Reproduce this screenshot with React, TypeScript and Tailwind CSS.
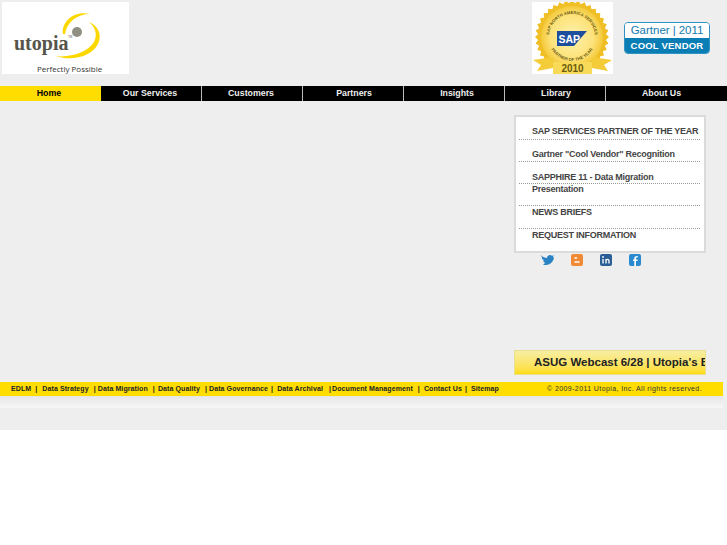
import React from 'react';

const navItems = [
    { label: 'Customers', cls: 'pr-[2px]' },
    { label: 'Partners', cls: 'pl-[2px]' },
    { label: 'Insights', cls: 'pl-[6px]' },
    { label: 'Library', cls: 'pl-[2px]' },
];

const newsRows = [
    { label: 'SAP SERVICES PARTNER OF THE YEAR', cls: 'h-[21px] pt-[6px] border-b border-dotted border-[#999999]' },
    { label: 'Gartner "Cool Vendor" Recognition', cls: 'h-[22px] pt-[8px] border-b border-dotted border-[#999999]' },
    { label: 'SAPPHIRE 11 - Data Migration Presentation', cls: 'h-[22px] pt-[9px] border-b border-dotted border-[#999999]' },
    { label: '', cls: 'h-[22px] border-b border-dotted border-[#999999]' },
    { label: 'NEWS BRIEFS', cls: 'h-[23px] border-b border-dotted border-[#999999]' },
    { label: 'REQUEST INFORMATION', cls: '' },
];

const sealPoints = Array.from({ length: 72 }, (_, i) => {
    const r = i % 2 === 0 ? 37 : 34;
    const a = (i * Math.PI) / 36;
    return `${40 + r * Math.cos(a)},${35 + r * Math.sin(a)}`;
}).join(' ');

const UtopiaLogo = () => (
    <div className="relative w-[127px] h-[72px] bg-white shrink-0">
        <svg className="absolute left-0 top-0" width="127" height="72" viewBox="0 0 127 72">
            <path d="M61 32 C59 20 72 8 88 12 C75 12 65 20 63 32 Z" fill="#fcd800" />
            <path d="M87 20 C97 24 100 34 96 42 C90 54 70 60 54 54 C68 56 86 50 92 40 C96 32 93 25 87 20 Z" fill="#fcd800" />
            <circle cx="75" cy="30" r="5" fill="#8f8f82" />
        </svg>
        <span className="absolute left-[12px] top-[29px] font-['Liberation_Serif',serif] font-bold text-[20px] leading-[24px] text-[#55554a]">utopia</span>
        <span className="absolute left-[66px] top-[33px] text-[3px] leading-[4px] text-[#666666]">TM</span>
        <span className="absolute left-[35px] top-[62px] font-['Open_Sans',sans-serif] text-[8px] leading-[10px] text-[#333333]">Perfectly Possible</span>
    </div>
);

const SapSeal = () => (
    <div className="w-[81px] h-[72px] bg-white shrink-0">
        <svg width="81" height="72" viewBox="0 0 81 72">
            <defs>
                <radialGradient id="seal">
                    <stop offset="0%" stopColor="#fff3b0" />
                    <stop offset="70%" stopColor="#fde27a" />
                    <stop offset="100%" stopColor="#f4c93a" />
                </radialGradient>
                <path id="ringTop" d="M17 35 A23 23 0 0 1 63 35" />
                <path id="ringBottom" d="M16 35 A24 24 0 0 0 64 35" />
            </defs>
            <polygon points={sealPoints} fill="#efbf25" />
            <circle cx="40" cy="35" r="31" fill="url(#seal)" />
            <text fontFamily="Liberation Sans, sans-serif" fontWeight="700" fontSize="4.2" fill="#6a5a10">
                <textPath href="#ringTop" startOffset="50%" textAnchor="middle">SAP NORTH AMERICA SERVICES</textPath>
            </text>
            <text fontFamily="Liberation Sans, sans-serif" fontWeight="700" fontSize="4.2" fill="#6a5a10">
                <textPath href="#ringBottom" startOffset="50%" textAnchor="middle">PARTNER OF THE YEAR</textPath>
            </text>
            <path d="M25 29 H55 L42 44 H25 Z" fill="#1f4f9c" />
            <text x="26.5" y="41" fontFamily="Liberation Sans, sans-serif" fontWeight="700" fontSize="10.5" fill="#ffffff">SAP</text>
            <path d="M1 58 L21 55 V66 L5 69 L9 63 Z" fill="#f4cc3a" />
            <path d="M80 58 L60 55 V66 L76 69 L72 63 Z" fill="#f4cc3a" />
            <rect x="21" y="60" width="39" height="12" fill="#f8da58" />
            <text x="40.5" y="70" textAnchor="middle" fontFamily="Liberation Sans, sans-serif" fontWeight="700" fontSize="10" fill="#6a5a10">2010</text>
        </svg>
    </div>
);

const GartnerBadge = () => (
    <div className="w-[86px] h-[32px] mt-[20px] ml-[11px] mr-[17px] rounded-[4px] border border-[#2f93c4] overflow-hidden flex flex-col shrink-0">
        <div className="h-[15px] bg-white flex items-center justify-center gap-[3px] text-[#1479ad] text-[11.5px] leading-none">
            <span>Gartner</span>
            <span>|</span>
            <span>2011</span>
        </div>
        <div className="flex-1 bg-[#0a7db5] flex items-center justify-center text-white font-bold text-[9.5px] tracking-[0.2px] leading-none">COOL VENDOR</div>
    </div>
);

const SocialIcons = () => (
    <div className="flex h-[13px] items-center">
        <svg className="ml-[26px]" width="14" height="12" viewBox="0 0 14 12">
            <path d="M0 1 C3 3 5 4 7 4 C7 1 11 0 12 2 L14 1 L13 3 L14 4 C13 8 10 11 6 11 L3 11 L5 9 L3 7 L4 6 L2 5 L2 3 Z" fill="#2a83c4" />
        </svg>
        <svg className="ml-[17px]" width="12" height="12" viewBox="0 0 12 12">
            <rect width="12" height="12" rx="2" fill="#f08a35" />
            <path d="M3.5 4 H6 M3.5 8 H8.5" stroke="#ffffff" strokeWidth="1.6" />
        </svg>
        <svg className="ml-[17px]" width="12" height="12" viewBox="0 0 12 12">
            <rect width="12" height="12" rx="2" fill="#2b5e94" />
            <path d="M3 5 V9.5 M6 9.5 V5 M6 7 C6 5 9 4.5 9 7 V9.5" stroke="#ffffff" strokeWidth="1.3" fill="none" />
            <circle cx="3" cy="3" r="0.9" fill="#ffffff" />
        </svg>
        <svg className="ml-[17px]" width="12" height="12" viewBox="0 0 12 12">
            <rect width="12" height="12" rx="2" fill="#2a8ad0" />
            <path d="M7 12 V7 H8.6 V5.4 H7 V4.4 C7 3.8 7.3 3.5 8.7 3.5 V2 C6.3 1.8 5.3 2.8 5.3 4.2 V5.4 H4 V7 H5.3 V12 Z" fill="#ffffff" />
        </svg>
    </div>
);

const FooterLinks = () => (
    <div className="flex items-center whitespace-nowrap">
        <span className="ml-[11px]">EDLM</span>
        <span className="ml-[4px]">|</span>
        <span className="ml-[5px]">Data Strategy</span>
        <span className="ml-[5px]">|</span>
        <span className="ml-[2px]">Data Migration</span>
        <span className="ml-[5px]">|</span>
        <span className="ml-[3px]">Data Quality</span>
        <span className="ml-[5px]">|</span>
        <span className="ml-[2px]">Data Governance</span>
        <span className="ml-[3px]">|</span>
        <span className="ml-[4px]">Data Archival</span>
        <span className="ml-[6px]">|</span>
        <span className="ml-[1px]">Document Management</span>
        <span className="ml-[5px]">|</span>
        <span className="ml-[4px]">Contact Us</span>
        <span className="ml-[3px]">|</span>
        <span className="ml-[4px]">Sitemap</span>
    </div>
);

export default function App() {
    return (
        <div className="min-h-screen bg-white font-['Liberation_Sans',sans-serif]">
            <div className="h-[430px] bg-[#eeeeee] overflow-hidden">
                {/* Header */}
                <div className="h-[86px] pt-[2px] pl-[2px] flex">
                    <UtopiaLogo />
                    <div className="flex-1" />
                    <SapSeal />
                    <GartnerBadge />
                </div>

                {/* Main nav */}
                <nav className="flex h-[15px] bg-black text-[8.8px] font-bold leading-[15px] text-center text-[#eeeeee]">
                    <a className="w-[101px] pr-[3px] bg-[#ffdd00] text-black">Home</a>
                    <a className="w-[100px] pr-[2px]">Our Services</a>
                    {navItems.map(item => (
                        <a key={item.label} className={`w-[101px] border-l border-[#bbbbbb] ${item.cls}`}>{item.label}</a>
                    ))}
                    <a className="flex-1 pr-[10px] border-l border-[#bbbbbb]">About Us</a>
                </nav>

                {/* Sidebar */}
                <div className="ml-[514px] w-[192px] h-[281px] pt-[14px]">
                    <div className="h-[138px] bg-white border-2 border-[#dadada] pt-[2px] pl-[3px] pr-[4px] text-[9px] tracking-[-0.25px] font-bold leading-[12px] text-[#444444]">
                        {newsRows.map((row, i) => (
                            <div key={i} className={`pl-[13px] ${row.cls}`}>
                                {row.label}
                            </div>
                        ))}
                    </div>
                    <SocialIcons />
                    <div className="mt-[84px] h-[25px] w-[192px] overflow-hidden whitespace-nowrap bg-gradient-to-b from-[#f7eea0] to-[#ffdd00] border border-[#eadf90] pl-[19px] text-[11.5px] font-bold leading-[23px] text-[#222222]">
                        ASUG Webcast 6/28 | Utopia's Blog
                    </div>
                </div>

                {/* Footer bar */}
                <div className="h-[14px] mr-[4px] bg-[#ffdd00] flex justify-between text-[7px] font-bold leading-[14px] text-[#222222] tracking-[0.1px]">
                    <FooterLinks />
                    <span className="mr-[21px] font-normal text-[#333333] tracking-[0.4px]">© 2009-2011 Utopia, Inc. All rights reserved.</span>
                </div>
                <div className="h-[12px] mr-[4px] bg-gradient-to-b from-[#e6e6e6] to-[#f6f6f6]" />
            </div>
        </div>
    );
}
